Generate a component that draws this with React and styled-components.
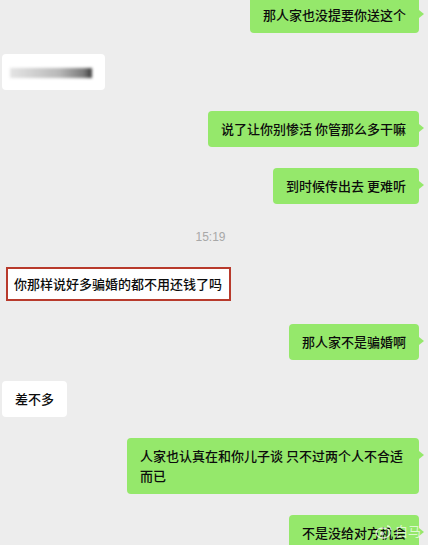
import React from "react";
import styled, { createGlobalStyle } from "styled-components";

const Global = createGlobalStyle`
  html, body { margin: 0; padding: 0; background: #ededed; overflow: hidden; }
  body { font-family: "Noto Sans CJK SC", "Noto Sans", sans-serif; }
`;

const Screen = styled.div`
  position: relative;
  width: 428px;
  height: 545px;
  overflow: hidden;
  background: #ededed;
`;

const List = styled.div`
  display: flex;
  flex-direction: column;
  gap: 21px;
  margin-top: -3px;
  padding: 0 9px 0 2px;
`;

const Bubble = styled.div`
  position: relative;
  align-self: ${(p) => (p.$mine ? "flex-end" : "flex-start")};
  box-sizing: border-box;
  max-width: 292px;
  padding: 8px 13px;
  border-radius: 4px;
  background: ${(p) => (p.$mine ? "#95e86b" : "#ffffff")};
  color: #0c0c0c;
  font-size: 13px;
  font-weight: 500;
  line-height: 20px;
  ${(p) =>
    p.$mine &&
    `
    &::after {
      content: "";
      position: absolute;
      right: -5px;
      top: 13px;
      border-left: 5px solid #95e86b;
      border-top: 4px solid transparent;
      border-bottom: 4px solid transparent;
    }
  `}
`;

const MarkedBubble = styled.div`
  align-self: flex-start;
  margin: 1px 0 2px 4px;
  padding: 5px 7px 5px 6px;
  border: 2px solid #b83a2c;
  background: #ffffff;
  color: #0c0c0c;
  font-size: 13px;
  font-weight: 500;
  line-height: 20px;
`;

const Blurred = styled.div`
  width: 82px;
  height: 10px;
  margin: 6px 0 4px -5px;
  background: linear-gradient(90deg, #e4e4e4 0%, #cfcfcf 30%, #b8b8b8 60%, #7a7a7a 90%, #3a3a3a 100%);
  filter: blur(1.6px);
`;

const Time = styled.div`
  align-self: center;
  margin: 4px 0 0 0;
  color: #a8a8a8;
  font-family: "Liberation Sans", "Noto Sans", sans-serif;
  font-size: 12px;
  line-height: 16px;
`;

const Watermark = styled.div`
  position: absolute;
  right: 7px;
  bottom: 6px;
  display: flex;
  align-items: center;
  gap: 2px;
  color: rgba(255, 255, 255, 0.7);
  font-size: 13px;
  line-height: 16px;
`;

export default function App() {
  return (
    <Screen>
      <Global />
      <List>
        <Bubble $mine>那人家也没提要你送这个</Bubble>
        <Bubble>
          <Blurred />
        </Bubble>
        <Bubble $mine>说了让你别惨活 你管那么多干嘛</Bubble>
        <Bubble $mine>到时候传出去 更难听</Bubble>
        <Time>15:19</Time>
        <MarkedBubble>你那样说好多骗婚的都不用还钱了吗</MarkedBubble>
        <Bubble $mine>那人家不是骗婚啊</Bubble>
        <Bubble>差不多</Bubble>
        <Bubble $mine>人家也认真在和你儿子谈 只不过两个人不合适 而已</Bubble>
        <Bubble $mine>不是没给对方机会</Bubble>
      </List>
      <Watermark>
        <svg width="18" height="15" viewBox="0 0 18 15">
          <ellipse cx="8" cy="9" rx="7" ry="5" fill="none" stroke="rgba(255,255,255,0.75)" strokeWidth="1.4" />
          <circle cx="7" cy="9.5" r="2" fill="rgba(255,255,255,0.75)" />
          <path d="M12 2 a4 4 0 0 1 4 4" fill="none" stroke="rgba(255,255,255,0.75)" strokeWidth="1.3" />
        </svg>
        <span>白马</span>
      </Watermark>
    </Screen>
  );
}
